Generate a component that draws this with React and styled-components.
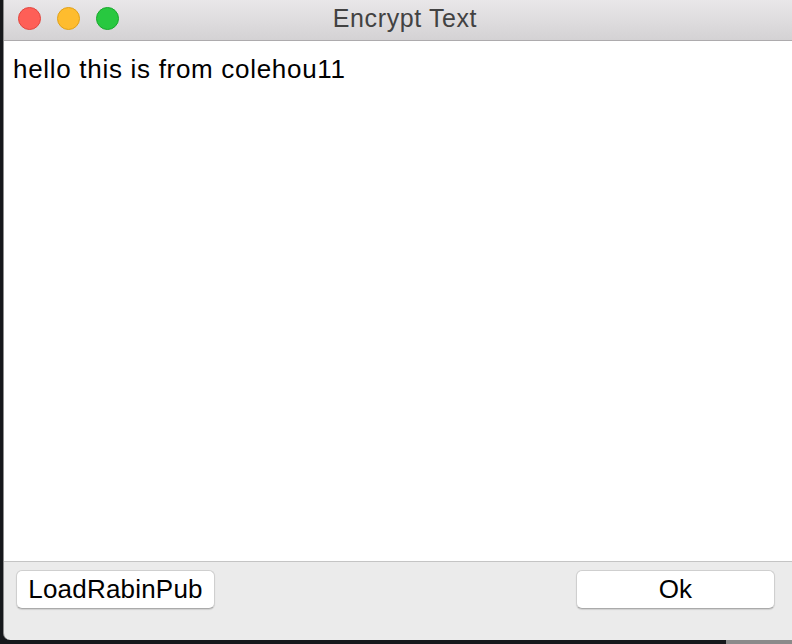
import React from 'react'
import styled, { createGlobalStyle } from 'styled-components'

const GlobalStyle = createGlobalStyle`
  html, body {
    margin: 0;
    padding: 0;
    background: #16181b;
    overflow: hidden;
  }
  body {
    font-family: "Liberation Sans", Arial, sans-serif;
  }
`;

const Screen = styled.div`
  width: 792px;
  height: 644px;
  display: flex;
  flex-direction: column;
  overflow: hidden;
  background: #16181b;
`;

const Window = styled.div`
  margin-left: 3px;
  height: 640px;
  flex-shrink: 0;
  display: flex;
  flex-direction: column;
  background: #ebebeb;
  border-left: 1px solid #8d8d8d;
  border-bottom-left-radius: 7px;
  overflow: hidden;
`;

const TitleBar = styled.div`
  height: 40px;
  flex-shrink: 0;
  display: flex;
  align-items: center;
  position: relative;
  background: linear-gradient(#e9e7e9, #d4d2d4);
  border-bottom: 1px solid #adabad;
`;

const Lights = styled.div`
  display: flex;
  gap: 16px;
  padding-left: 14px;
  margin-top: -4px;
`;

const Light = styled.span`
  width: 23px;
  height: 23px;
  border-radius: 50%;
  background: ${p => p.$fill};
  border: 1px solid ${p => p.$edge};
  box-sizing: border-box;
`;

const Title = styled.div`
  position: absolute;
  left: 0;
  right: 0;
  top: 4px;
  text-align: center;
  font-size: 25px;
  letter-spacing: 0.6px;
  color: #424242;
  padding-left: 14px;
`;

const Editor = styled.div`
  flex: 1;
  background: #fff;
  padding: 13px 10px 0 9px;
  font-size: 26px;
  letter-spacing: 0.7px;
  color: #000;
  line-height: 30px;
`;

const Footer = styled.div`
  height: 79px;
  flex-shrink: 0;
  border-top: 1px solid #c4c4c4;
  display: flex;
  justify-content: space-between;
  align-items: flex-start;
  padding: 8px 17px 0 12px;
  box-sizing: border-box;
`;

const Button = styled.button`
  width: 199px;
  height: 39px;
  background: #fff;
  border: 1px solid #cfcfcf;
  border-bottom-color: #aaa;
  border-radius: 6px;
  box-shadow: 0 1px 1px rgba(0, 0, 0, 0.12);
  font-family: "Liberation Sans", Arial, sans-serif;
  font-size: 26px;
  letter-spacing: 0.2px;
  color: #000;
  padding: 0;
`;

const Backdrop = styled.div`
  flex: 1;
  position: relative;
  background: #16181b;
`;

const BackdropBar = styled.div`
  position: absolute;
  right: 0;
  top: 0;
  width: 66px;
  height: 100%;
  background: #8a8a8a;
`;

export default function App() {
  return (
    <Screen>
      <GlobalStyle />
      <Window>
        <TitleBar>
          <Lights>
            <Light $fill="#fe5f57" $edge="#e2463f" />
            <Light $fill="#febc2e" $edge="#e1a116" />
            <Light $fill="#28c840" $edge="#17a92b" />
          </Lights>
          <Title>Encrypt Text</Title>
        </TitleBar>
        <Editor>hello this is from colehou11</Editor>
        <Footer>
          <Button>LoadRabinPub</Button>
          <Button>Ok</Button>
        </Footer>
      </Window>
      <Backdrop>
        <BackdropBar />
      </Backdrop>
    </Screen>
  );
}
